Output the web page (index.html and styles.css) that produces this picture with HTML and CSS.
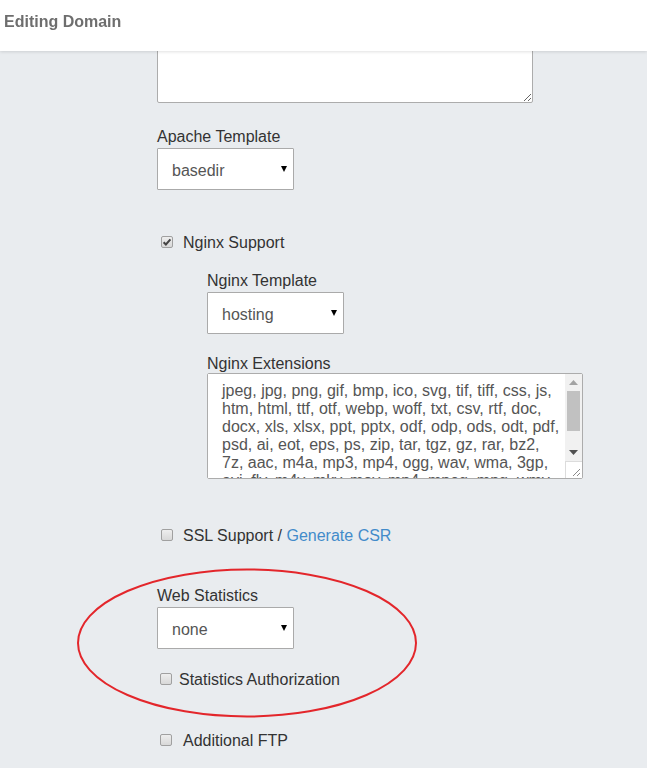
FILE: index.html
```html
<!DOCTYPE html>
<html lang="en">
<head>
  <meta charset="UTF-8" />
  <meta name="viewport" content="width=device-width, initial-scale=1.0" />
  <title>Editing Domain</title>
  <link rel="stylesheet" href="styles.css">
</head>
<body>
  <div class="header">
    <h1>Editing Domain</h1>
  </div>

  <form class="domain-form">
    <textarea class="aliases" name="aliases"></textarea>

    <div class="field first">
      <label for="apache">Apache Template</label>
      <div class="select-wrap">
        <select id="apache" name="apache">
          <option>basedir</option>
        </select>
      </div>
    </div>

    <label class="check-row gap-nginx">
      <input type="checkbox" checked />
      <span>Nginx Support</span>
    </label>

    <div class="nested">
      <div class="field tight">
        <label for="nginx">Nginx Template</label>
        <div class="select-wrap">
          <select id="nginx" name="nginx">
            <option>hosting</option>
          </select>
        </div>
      </div>

      <div class="field tight">
        <label for="ext" class="no-gap">Nginx Extensions</label>
        <div class="ext-box">
          <textarea id="ext" class="ext" name="ext">jpeg, jpg, png, gif, bmp, ico, svg, tif, tiff, css, js, htm, html, ttf, otf, webp, woff, txt, csv, rtf, doc, docx, xls, xlsx, ppt, pptx, odf, odp, ods, odt, pdf, psd, ai, eot, eps, ps, zip, tar, tgz, gz, rar, bz2, 7z, aac, m4a, mp3, mp4, ogg, wav, wma, 3gp, avi, flv, m4v, mkv, mov, mp4, mpeg, mpg, wmv, exe, iso, dmg, swf</textarea>
          <!-- scrollbar drawn by hand, the screenshot browser hides real ones -->
          <div class="scrollbar">
            <div class="sb-btn">
              <svg width="9" height="5"><path d="M0 5h9L4.5 0z" fill="#a3a3a3" /></svg>
            </div>
            <div class="sb-track"><div class="sb-thumb"></div></div>
            <div class="sb-btn">
              <svg width="9" height="5"><path d="M0 0h9L4.5 5z" fill="#505050" /></svg>
            </div>
            <div class="sb-corner">
              <svg width="8" height="8"><path d="M1 8L8 1M5 8L8 5" stroke="#8a8a8a" stroke-width="1" /></svg>
            </div>
          </div>
        </div>
      </div>
    </div>

    <label class="check-row gap-ssl">
      <input type="checkbox" />
      <span>SSL Support / <a href="#" class="link">Generate CSR</a></span>
    </label>

    <div class="field stats">
      <label for="stats">Web Statistics</label>
      <div class="select-wrap">
        <select id="stats" name="stats">
          <option>none</option>
        </select>
      </div>
    </div>

    <label class="check-row small tight-row">
      <input type="checkbox" />
      <span>Statistics Authorization</span>
    </label>

    <label class="check-row wide gap-ftp">
      <input type="checkbox" />
      <span>Additional FTP</span>
    </label>
  </form>

  <!-- red annotation circle -->
  <svg class="mark" width="344" height="152" viewBox="0 0 344 152">
    <ellipse cx="172" cy="76" rx="169" ry="73.5" fill="none" stroke="#e3262b" stroke-width="2" />
  </svg>
</body>
</html>
```

FILE: styles.css
```css
body {
  margin: 0;
  background-color: #e9ecef;
  font-family: "Liberation Sans", Arial, sans-serif;
  font-size: 16px;
  line-height: 18px;
  color: #333;
}

.header {
  position: fixed; /* sits over the scrolled form */
  top: 0;
  left: 0;
  right: 0;
  height: 51px;
  background: #fff;
  box-shadow: 0 1px 3px rgba(0, 0, 0, 0.12);
  z-index: 2;
}
.header h1 {
  margin: 0;
  padding: 13px 4px 11px;
  font-size: 16px;
  line-height: 18px;
  font-weight: bold;
  color: #6e6e6e;
}

.domain-form {
  padding-left: 157px;
  padding-bottom: 40px;
}

textarea {
  display: block;
  box-sizing: border-box;
  font-family: "Liberation Sans", Arial, sans-serif;
  font-size: 16px;
  line-height: 18px;
  color: #555;
  background: #fff;
  border: 1px solid #acacac;
  border-radius: 2px;
  margin: 0;
  outline: none;
}
.aliases {
  width: 376px;
  height: 83px;
  margin-top: 20px;
}

.field label {
  display: block;
  margin-bottom: 2px;
  padding-top: 1px;
}
.field label.no-gap {
  margin-bottom: 0;
  padding-top: 0;
}
.field.first { margin-top: 24px; }
.field.tight { margin-top: 20px; }
.field.tight + .field.tight { margin-top: 21px; }
.field.stats { margin-top: 42px; }

.select-wrap {
  position: relative;
  width: max-content;
}
.select-wrap::after { /* little black arrow */
  content: "";
  position: absolute;
  right: 7px;
  top: 18px;
  border-left: 3px solid transparent;
  border-right: 3px solid transparent;
  border-top: 6px solid #000;
  pointer-events: none;
}
select {
  display: block;
  appearance: none;
  -webkit-appearance: none;
  box-sizing: border-box;
  width: 137px;
  height: 42px;
  margin: 0;
  padding: 2px 20px 0 14px;
  font-family: "Liberation Sans", Arial, sans-serif;
  font-size: 16px;
  color: #555;
  background: #fff;
  border: 1px solid #aaa;
  border-radius: 1px;
  outline: none;
}

.nested {
  padding-left: 50px;
}

.ext-box {
  display: flex;
  box-sizing: border-box;
  width: 376px;
  height: 106px;
  border: 1px solid #acacac;
  border-radius: 2px;
  background: #fff;
}
.ext {
  flex: 1;
  height: 100%;
  border: none;
  border-radius: 0;
  padding: 8px 4px 8px 14px;
  overflow: hidden;
  resize: none;
}
.scrollbar {
  width: 17px;
  display: flex;
  flex-direction: column;
  background: #f1f1f1;
}
.sb-btn {
  height: 17px;
  display: flex;
  align-items: center;
  justify-content: center;
}
.sb-track {
  flex: 1;
  padding: 0 2px;
}
.sb-thumb {
  height: 40px;
  background: #c1c1c1;
}
.sb-corner {
  height: 17px;
  background: #fff;
  border-top: 1px solid #dcdcdc;
  border-left: 1px solid #dcdcdc;
  box-sizing: border-box;
  display: flex;
  align-items: flex-end;
  justify-content: flex-end;
  padding: 0 2px 2px 0;
}

.check-row {
  display: flex;
  align-items: center;
  gap: 10px;
  padding-left: 4px;
  height: 18px;
}
.check-row span {
  padding-top: 2px; /* nudge text 1px down */
}
.check-row.small { gap: 7px; padding-left: 3px; }
.check-row.wide { gap: 11px; padding-left: 3px; }
.gap-nginx { margin-top: 43px; }
.gap-ssl { margin-top: 47px; }
.tight-row { margin-top: 21px; }
.gap-ftp { margin-top: 43px; }

input[type="checkbox"] {
  appearance: none;
  -webkit-appearance: none;
  width: 12px;
  height: 12px;
  margin: 0;
  flex: none;
  border: 1px solid #a0a0a0;
  border-radius: 2px;
  background: linear-gradient(#eeeeee, #d8d8d8);
}
input[type="checkbox"]:checked {
  background: url("data:image/svg+xml;utf8,<svg xmlns='http://www.w3.org/2000/svg' width='10' height='10'><path d='M1.6 5.2l2.3 2.3L8.4 2.4' fill='none' stroke='%23444' stroke-width='2'/></svg>") no-repeat center, linear-gradient(#eeeeee, #d8d8d8);
}

.link {
  color: #428bca;
  text-decoration: none;
}

.mark {
  position: absolute; /* annotation drawn over the form */
  left: 75px;
  top: 567px;
}
```
